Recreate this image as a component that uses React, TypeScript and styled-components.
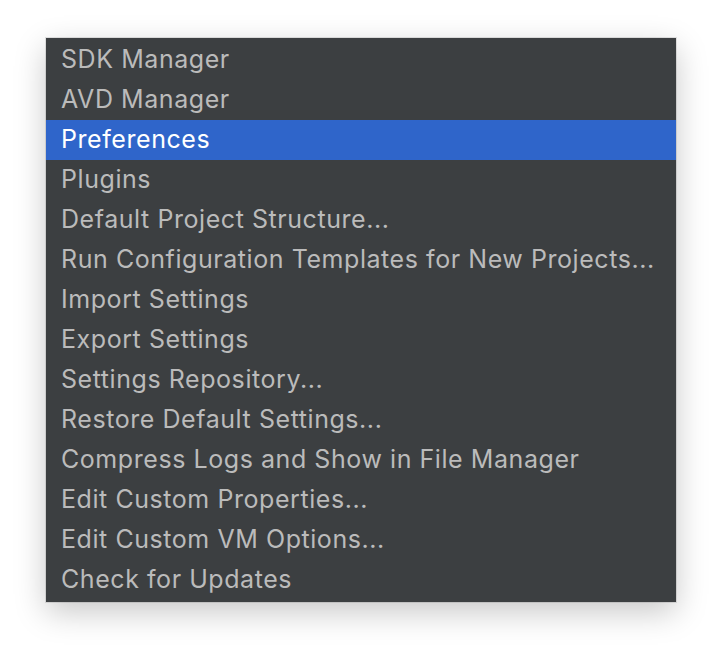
import React from "react";
import styled, { createGlobalStyle } from "styled-components";

const Global = createGlobalStyle`
  html, body { margin: 0; padding: 0; background: #ffffff; }
  body { width: 722px; height: 656px; overflow: hidden; }
`;

const Page = styled.div`
  padding: 38px 0 0 46px;
`;

const Menu = styled.ul`
  list-style: none;
  margin: 0;
  width: 630px;
  box-sizing: border-box;
  padding: 2px 0;
  background: #3c3f41;
  box-shadow: 0 0 0 1px rgba(0, 0, 0, 0.1), 0 10px 30px rgba(0, 0, 0, 0.22);
  font-family: Inter, "Noto Sans", sans-serif;
  font-size: 25px;
  letter-spacing: 0.56px;
`;

const Item = styled.li<{ $active?: boolean }>`
  height: 40px;
  box-sizing: border-box;
  display: flex;
  align-items: center;
  padding: 0 0 2px 15px;
  color: ${(p) => (p.$active ? "#ffffff" : "#bbbbbb")};
  background: ${(p) => (p.$active ? "#2f65ca" : "transparent")};
  white-space: nowrap;
`;

const items = [
  "SDK Manager",
  "AVD Manager",
  "Preferences",
  "Plugins",
  "Default Project Structure...",
  "Run Configuration Templates for New Projects...",
  "Import Settings",
  "Export Settings",
  "Settings Repository...",
  "Restore Default Settings...",
  "Compress Logs and Show in File Manager",
  "Edit Custom Properties...",
  "Edit Custom VM Options...",
  "Check for Updates",
];

export default function App() {
  return (
    <Page>
      <Global />
      <Menu>
        {items.map((t) => (
          <Item key={t} $active={t === "Preferences"}>
            {t}
          </Item>
        ))}
      </Menu>
    </Page>
  );
}
